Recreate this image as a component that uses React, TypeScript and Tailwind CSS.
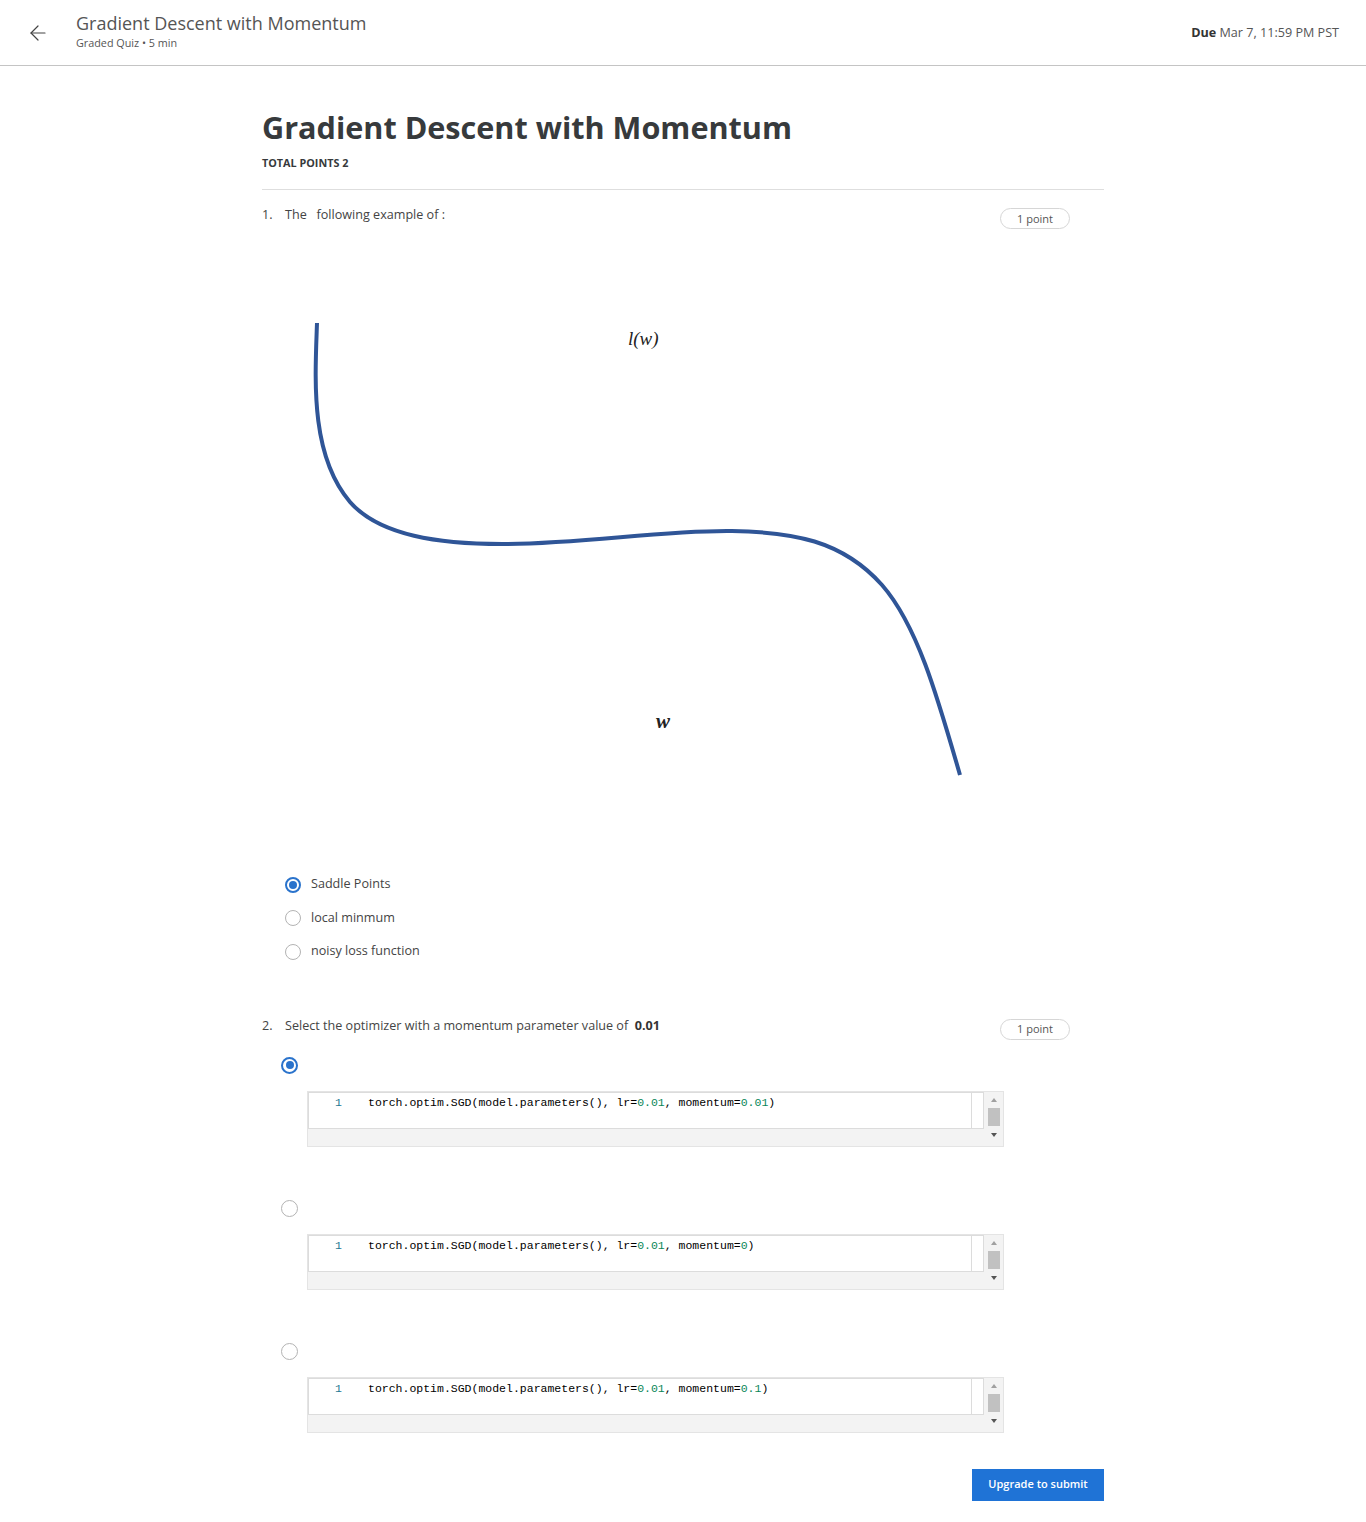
import { ArrowLeft } from "lucide-react";

const sans = { fontFamily: '"Open Sans", "Noto Sans", sans-serif' };
const mono = { fontFamily: '"Liberation Mono", "DejaVu Sans Mono", monospace' };

function Radio({ checked, size }: { checked?: boolean; size: "sm" | "md" }) {
  const box = size === "sm" ? "w-4 h-4" : "w-[17px] h-[17px]";
  if (checked) {
    return (
      <span className={`${box} rounded-full border-2 border-[#2a73cc] flex items-center justify-center shrink-0`}>
        <span className="w-[8px] h-[8px] rounded-full bg-[#2a73cc]" />
      </span>
    );
  }
  return <span className={`${box} block rounded-full border-[1.5px] border-[#b3b3b3] shrink-0`} />;
}

function PointPill() {
  return (
    <span className="mt-[2px] mr-[34px] h-[21px] w-[70px] rounded-full border border-[#d6d6d6] text-[11px] text-[#555] flex items-center justify-center">
      1 point
    </span>
  );
}

function CodeBox({ value }: { value: string }) {
  return (
    <div className="ml-[45px] mt-[17px] w-[697px] h-[56px] border border-[#e4e4e4] bg-[#f3f3f3] flex">
      <div className="flex-1 flex flex-col">
        <div className="h-[37px] bg-white border border-[#dcdcdc] flex">
          <div className="flex-1 flex items-start pt-[2px] text-[11.5px] leading-[16px]" style={mono}>
            <span className="w-[33px] text-right text-[#237893]">1</span>
            <span className="ml-[26px] text-[#000]">
              torch.optim.SGD(model.parameters(), lr=<span className="text-[#098658]">0.01</span>, momentum=
              <span className="text-[#098658]">{value}</span>)
            </span>
          </div>
          <div className="w-[12px] border-l border-[#dcdcdc]" />
        </div>
      </div>
      <div className="w-[19px] flex flex-col items-center pt-[6px]">
        <span className="w-0 h-0 border-l-[3.5px] border-r-[3.5px] border-b-[4px] border-l-transparent border-r-transparent border-b-[#a0a0a0]" />
        <span className="mt-[6px] w-[12px] h-[18px] bg-[#c1c1c1]" />
        <span className="mt-[7px] w-0 h-0 border-l-[3.5px] border-r-[3.5px] border-t-[4px] border-l-transparent border-r-transparent border-t-[#555]" />
      </div>
    </div>
  );
}

export default function App() {
  const q1 = [
    { label: "Saddle Points", checked: true },
    { label: "local minmum", checked: false },
    { label: "noisy loss function", checked: false },
  ];
  const q2 = [
    { value: "0.01", checked: true },
    { value: "0", checked: false },
    { value: "0.1", checked: false },
  ];

  return (
    <div className="w-[1366px] min-h-[1522px] bg-white text-[#333]" style={sans}>
      <header className="h-[66px] border-b border-[#c4c4c4] flex items-start">
        <div className="ml-[26px] mt-[21px] text-[#444]">
          <ArrowLeft size={24} strokeWidth={1.2} />
        </div>
        <div className="ml-[26px] mt-[11px]">
          <div className="text-[18px] leading-[24px] text-[#555]">Gradient Descent with Momentum</div>
          <div className="text-[10.8px] leading-[15px] text-[#555]">Graded Quiz • 5 min</div>
        </div>
        <div className="ml-auto mr-[27px] mt-[24px] text-[12.6px] leading-[17px] text-[#555]">
          <span className="font-bold text-[#333]">Due</span> Mar 7, 11:59 PM PST
        </div>
      </header>

      <main className="ml-[262px] w-[842px] pb-[21px]">
        <h1 className="mt-[43px] text-[30.6px] leading-[36px] font-bold text-[#373a3c]">
          Gradient Descent with Momentum
        </h1>
        <div className="mt-[10px] text-[10.8px] leading-[15px] font-bold text-[#373a3c]">TOTAL POINTS 2</div>
        <div className="mt-[19px] h-px bg-[#dedede]" />

        <div className="pt-[16px] flex items-start text-[12.6px] leading-[18px] text-[#444]">
          <span className="w-[23px]">1.</span>
          <span className="flex-1">The&nbsp;&nbsp; following example of :</span>
          <PointPill />
        </div>

        <svg width="760" height="580" viewBox="0 0 760 580" className="mt-[11px] block">
          <path
            d="M55 83 C53 140, 48 215, 88 262 C118 296, 178 304, 240 304 C320 304, 400 290, 470 291 C530 292, 580 300, 620 345 C655 385, 675 455, 698 535"
            fill="none"
            stroke="#2f5597"
            strokeWidth="4"
          />
          <text x="366" y="105" fontSize="19" fontStyle="italic" fill="#222" fontFamily="'Liberation Serif', serif">
            l(w)
          </text>
          <text x="394" y="488" fontSize="21" fontStyle="italic" fontWeight="bold" fill="#222" fontFamily="'Liberation Serif', serif">
            w
          </text>
        </svg>

        <div className="mt-[48px] ml-[23px] flex flex-col">
          {q1.map((o) => (
            <label key={o.label} className="h-[33.5px] flex items-center gap-[10px] text-[12.6px] text-[#444]">
              <Radio checked={o.checked} size="sm" />
              <span>{o.label}</span>
            </label>
          ))}
        </div>

        <div className="mt-[48px] flex items-start text-[12.6px] leading-[18px] text-[#444]">
          <span className="w-[23px]">2.</span>
          <span className="flex-1">
            Select the optimizer with a momentum parameter value of&nbsp; <span className="font-bold text-[#333]">0.01</span>
          </span>
          <PointPill />
        </div>

        {q2.map((o, i) => (
          <div key={o.value} className={i === 0 ? "mt-[17px]" : "mt-[53px]"}>
            <div className="ml-[19px]">
              <Radio checked={o.checked} size="md" />
            </div>
            <CodeBox value={o.value} />
          </div>
        ))}

        <div className="mt-[36px] flex justify-end">
          <button className="w-[132px] h-[32px] bg-[#1f73d6] text-white text-[11px] font-semibold">Upgrade to submit</button>
        </div>
      </main>
    </div>
  );
}
